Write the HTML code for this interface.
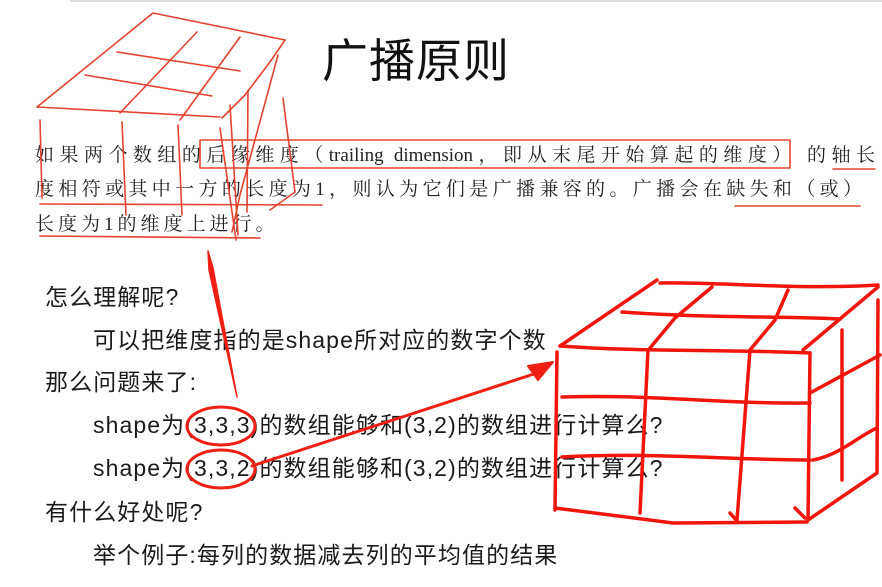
<!DOCTYPE html>
<html><head><meta charset="utf-8"><style>
html,body{margin:0;padding:0;width:882px;height:587px;overflow:hidden;background:#fff;}
.t{position:absolute;white-space:nowrap;}
.title{left:322px;top:25px;font:46px "Liberation Sans","Noto Sans CJK SC",sans-serif;color:#111;letter-spacing:1px;}
.s{font-family:"Liberation Serif","Noto Serif CJK SC",serif;font-size:19px;color:#222;letter-spacing:4px;}
.j{text-align:justify;text-align-last:justify;letter-spacing:0;}
.m{font-family:"Liberation Sans","Noto Sans CJK SC",sans-serif;font-size:23px;color:#1a1a1a;line-height:28px;letter-spacing:1.1px;}
</style></head><body>
<div style="position:absolute;left:70px;top:0;width:812px;height:2px;background:#ddd"></div>
<div class="t title">广播原则</div>
<div class="t s j" style="left:35px;top:140px;width:840px">如果两个数组的后缘维度（trailing dimension，即从末尾开始算起的维度） 的轴长</div>
<div class="t s j" style="left:35px;top:174px;width:827px">度相符或其中一方的长度为1，则认为它们是广播兼容的。广播会在缺失和（或）</div>
<div class="t s" style="left:35px;top:209px">长度为1的维度上进行。</div>
<div class="t m" style="left:45px;top:283px">怎么理解呢?</div>
<div class="t m" style="left:93px;top:326px">可以把维度指的是shape所对应的数字个数</div>
<div class="t m" style="left:45px;top:368px">那么问题来了:</div>
<div class="t m" style="left:93px;top:411px">shape为(3,3,3)的数组能够和(3,2)的数组进行计算么?</div>
<div class="t m" style="left:93px;top:454px">shape为(3,3,2)的数组能够和(3,2)的数组进行计算么?</div>
<div class="t m" style="left:45px;top:498px">有什么好处呢?</div>
<div class="t m" style="left:93px;top:541px">举个例子:每列的数据减去列的平均值的结果</div>
<svg width="882" height="587" style="position:absolute;left:0;top:0" fill="none" stroke-linecap="round" stroke-linejoin="round">
<g stroke="#e5422f" stroke-width="1.6">
<path d="M37,107 L153,13 L285,40"/>
<path d="M37,107 L220,117"/>
<path d="M285,40 L270,62 L245,95 L222,118"/>
<path d="M117,52 L240,71"/><path d="M85,75 L212,96"/>
<path d="M197,32 L120,113"/><path d="M240,37 L180,120"/>
<path d="M40,120 L42,198"/><path d="M122,122 L126,215"/><path d="M178,125 L182,215"/>
<path d="M248,90 L247,212"/><path d="M230,105 L238,235"/><path d="M220,128 L236,240"/>
<path d="M283,98 L295,192 L270,210"/><path d="M278,55 L240,195 L232,232"/>
<path d="M200,140 L790,140 L790,168 L200,168 Z"/>
<path d="M40,204 L322,205"/><path d="M40,236 L260,238"/>
<path d="M833,169 L875,169"/><path d="M735,206 L860,206"/>
</g>
<g stroke="#f01f14" stroke-width="3">
<ellipse cx="221" cy="426" rx="34" ry="19"/>
<ellipse cx="221" cy="469" rx="34" ry="19"/>
</g>
<path d="M237,397 L213,268 L208,251 L209,270 Z" fill="#f01f14" stroke="#f01f14" stroke-width="1.5"/>
<path d="M252,466 L540,372" stroke="#f01f14" stroke-width="3"/>
<path d="M553,362 L528,366 L538,380 Z" fill="#f01f14" stroke="#f01f14" stroke-width="2"/>
<g stroke="#f2150c" stroke-width="3.5">
<path d="M560,346 L657,280"/><path d="M660,283 C720,282 800,290 878,285"/>
<path d="M878,287 L803,350"/><path d="M560,346 C640,352 720,349 810,353"/>
<path d="M622,312 C700,318 780,316 840,319"/>
<path d="M712,287 L675,318 L650,348"/><path d="M788,290 L775,320 L750,350"/>
<path d="M557,352 L555,510"/><path d="M555,508 L673,523 L807,522"/>
<path d="M810,353 L808,520"/><path d="M878,300 L877,473 L808,520"/>
<path d="M648,350 L640,513"/><path d="M750,350 L737,520"/>
<path d="M562,397 C650,394 720,404 810,403"/><path d="M562,457 C650,452 730,460 810,460"/>
<path d="M810,393 L880,355"/><path d="M813,460 C840,455 860,435 877,428"/>
<path d="M842,330 L842,480"/>
<path d="M730,513 L737,521"/><path d="M795,508 L805,518"/>
</g>
</svg>
</body></html>
